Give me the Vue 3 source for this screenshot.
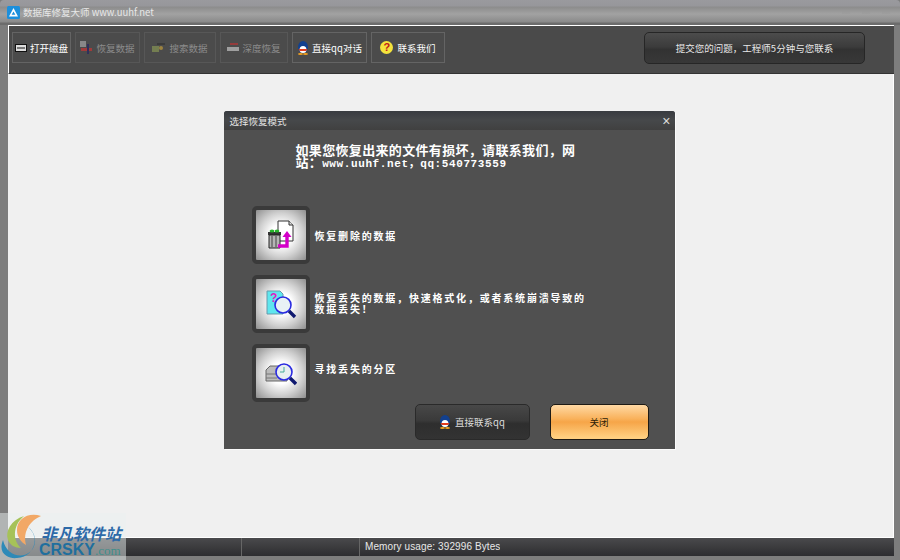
<script setup>
const tools = [
  { label: '打开磁盘', icon: 'disk', width: 59 },
  { label: '恢复数据', icon: 'restore', width: 65, off: true },
  { label: '搜索数据', icon: 'search', width: 72, off: true },
  { label: '深度恢复', icon: 'deep', width: 68, off: true },
  { label: '直接qq对话', icon: 'qq', width: 75 },
  { label: '联系我们', icon: 'help', width: 74 },
]
</script>

<template>
  <div class="window">
    <header class="titlebar">
      <svg class="app-icon" width="13" height="13" viewBox="0 0 13 13">
        <rect width="13" height="13" rx="1.5" fill="#1c8fdc" />
        <path d="M6.5 2 L11 10.5 H2 Z M6.5 5.4 L4.6 8.8 H8.4 Z" fill="#fff" fill-rule="evenodd" />
      </svg>
      <span class="app-title">数据库修复大师 www.uuhf.net</span>
      <div class="win-btns">
        <i></i><i></i><i></i>
      </div>
    </header>

    <div class="frame">
      <div class="toolbar">
        <button
          v-for="t in tools"
          :key="t.label"
          class="tool"
          :class="{ off: t.off }"
          :style="{ width: t.width + 'px' }"
        >
          <svg v-if="t.icon === 'disk'" width="12" height="8" viewBox="0 0 12 8">
            <rect x="0.5" y="0.5" width="11" height="7" fill="#ddd" stroke="#111" />
            <rect x="2" y="3" width="8" height="2" fill="#777" />
          </svg>
          <svg v-else-if="t.icon === 'restore'" width="13" height="14" viewBox="0 0 13 14">
            <rect x="0" y="0" width="6" height="6" fill="#aaa" />
            <rect x="1" y="7" width="11" height="3" fill="#c33" />
            <rect x="7" y="3" width="2" height="10" fill="#226" />
          </svg>
          <svg v-else-if="t.icon === 'search'" width="14" height="11" viewBox="0 0 14 11">
            <rect x="0" y="4" width="7" height="6" fill="#8a9a55" />
            <rect x="5" y="1" width="8" height="2" fill="#333" />
            <circle cx="9" cy="6" r="2" fill="#c9a23a" />
          </svg>
          <svg v-else-if="t.icon === 'deep'" width="12" height="9" viewBox="0 0 12 9">
            <rect x="0" y="4" width="12" height="4" fill="#ccc" />
            <rect x="3" y="0" width="8" height="2" fill="#b33" />
          </svg>
          <svg v-else-if="t.icon === 'qq'" width="12" height="14" viewBox="0 0 12 14">
            <ellipse cx="6" cy="6" rx="5" ry="6" fill="#12408f" />
            <ellipse cx="6" cy="8.5" rx="3.4" ry="3.6" fill="#fff" />
            <path d="M1.5 8 L10.5 8 L9 10 L3 10 Z" fill="#e23a1c" />
            <ellipse cx="3.5" cy="13" rx="2.5" ry="1" fill="#f0a020" />
            <ellipse cx="8.5" cy="13" rx="2.5" ry="1" fill="#f0a020" />
          </svg>
          <span v-else class="help-dot">?</span>
          <span>{{ t.label }}</span>
        </button>
        <button class="ask">提交您的问题，工程师5分钟与您联系</button>
      </div>

      <main class="content">
        <section class="dialog">
          <div class="dialog-title">
            <span>选择恢复模式</span>
            <span class="dialog-x">×</span>
          </div>
          <div class="dialog-body">
            <div class="notice">
              <div>如果您恢复出来的文件有损坏，请联系我们，网</div>
              <div class="notice-site">站：<span class="mono">www.uuhf.net，qq:540773559</span></div>
            </div>

            <div class="mode">
              <div class="mode-btn">
                <svg width="32" height="32" viewBox="0 0 32 32">
                  <path d="M13 2 H24 L28 6 V22 H13 Z" fill="#fff" stroke="#333" />
                  <path d="M24 2 V6 H28" fill="#ddd" stroke="#333" />
                  <rect x="3" y="13" width="13" height="3" fill="#333" />
                  <path d="M4 16 H15 V29 H4 Z" fill="#b5b5b5" stroke="#222" />
                  <path d="M7 17 V28 M11 17 V28" stroke="#444" />
                  <ellipse cx="7" cy="12" rx="2.4" ry="1.6" fill="#25b52a" />
                  <ellipse cx="12" cy="12" rx="2.4" ry="1.6" fill="#25b52a" />
                  <path d="M13 27 H22 V17" fill="none" stroke="#d400c8" stroke-width="3.4" />
                  <path d="M17.5 18 L22 12 L26.5 18 Z" fill="#d400c8" />
                </svg>
              </div>
              <span class="mode-text">恢复删除的数据</span>
            </div>

            <div class="mode">
              <div class="mode-btn">
                <svg width="32" height="32" viewBox="0 0 32 32">
                  <path d="M2 3 H15 L18 6 V26 H2 Z" fill="#5fe6ee" stroke="#69a" />
                  <text x="5" y="14" class="q-mark">?</text>
                  <circle cx="18" cy="17" r="8" fill="#e9f1f5" stroke="#2a2ae0" stroke-width="1.6" />
                  <path d="M24 23 L30 29" stroke="#101a70" stroke-width="3.4" />
                </svg>
              </div>
              <span class="mode-text up-2">恢复丢失的数据，快速格式化，或者系统崩溃导致的数据丢失！</span>
            </div>

            <div class="mode">
              <div class="mode-btn">
                <svg width="32" height="32" viewBox="0 0 32 32">
                  <path d="M1 13 L5 9 H22 V24 H1 Z" fill="#bbb" stroke="#666" />
                  <path d="M1 17 H12 M1 21 H12" stroke="#777" />
                  <circle cx="19" cy="15" r="8" fill="#e8eef0" stroke="#2a2ae0" stroke-width="1.6" />
                  <path d="M19 10 V15 H15" fill="none" stroke="#4a9" />
                  <path d="M25 21 L31 27" stroke="#101a70" stroke-width="3.4" />
                </svg>
              </div>
              <span class="mode-text up-10">寻找丢失的分区</span>
            </div>

            <div class="dialog-actions">
              <button class="btn-dark">
                <svg width="12" height="14" viewBox="0 0 12 14">
                  <ellipse cx="6" cy="6" rx="5" ry="6" fill="#12408f" />
                  <ellipse cx="6" cy="8.5" rx="3.4" ry="3.6" fill="#fff" />
                  <path d="M1.5 8 L10.5 8 L9 10 L3 10 Z" fill="#e23a1c" />
                  <ellipse cx="3.5" cy="13" rx="2.5" ry="1" fill="#f0a020" />
                  <ellipse cx="8.5" cy="13" rx="2.5" ry="1" fill="#f0a020" />
                </svg>
                直接联系qq
              </button>
              <button class="btn-orange">关闭</button>
            </div>
          </div>
        </section>
      </main>

      <footer class="statusbar">
        <span class="cell first"></span>
        <span class="cell second"></span>
        <span class="cell">Memory usage: 392996 Bytes</span>
      </footer>
    </div>

    <!-- site watermark sits over the window corner -->
    <div class="watermark">
      <svg class="wm-logo" width="42" height="47" viewBox="0 0 42 47">
        <path d="M41 3 C28 -1 17 6 17 17 C17 24 21 29 26 32 C23 22 27 9 41 3 Z" fill="#f2a866" />
        <path d="M24 3 C11 7 5 18 8 27 C10 32 15 35 21 35 C13 28 12 13 24 3 Z" fill="#a6c258" />
        <path d="M28 14 C36 20 38 32 30 39 C20 47 6 41 3 27 C-3 42 10 46 17 45 C32 45 42 26 28 14 Z" fill="#2e8ab8" />
      </svg>
      <div class="wm-text">
        <span class="wm-cn">非凡软件站</span>
        <span class="wm-en">CRSKY<small>.com</small></span>
      </div>
    </div>
  </div>
</template>

<style scoped>
.window {
  position: relative;
  width: 900px;
  height: 560px;
  overflow: hidden;
  display: flex;
  flex-direction: column;
  background: #7d7d7d;
  font-family: "Noto Sans CJK SC", "Liberation Sans", sans-serif;
}

.titlebar {
  height: 25px;
  flex: none;
  display: flex;
  align-items: flex-start;
  padding: 6px 10px 0 7px;
  box-sizing: border-box;
  background: linear-gradient(#9a9a9e 0, #97979b 6px, #8c8c8c 7px, #a2a2a2 14px, #8a8a8a 22px, #6c6c6c 23px);
  border-radius: 4px 4px 0 0;
}

.app-icon {
  flex: none;
}

.app-title {
  margin-left: 3px;
  font-size: 9.5px;
  line-height: 13px;
  color: #e8e8e8;
}

.win-btns {
  margin-left: auto;
  margin-top: 5px;
  display: flex;
  gap: 12px;
  opacity: 0.35;
}

.win-btns i {
  width: 8px;
  height: 3px;
  background: #999;
}

.frame {
  flex: 1;
  min-height: 0;
  display: flex;
  flex-direction: column;
  margin: 0 6px 4px 8px;
  border-top: 1px solid #fff;
}

.toolbar {
  height: 48px;
  flex: none;
  display: flex;
  align-items: flex-start;
  gap: 4px;
  padding: 6px 0 0 3px;
  box-sizing: border-box;
  background: #4a4a4a;
  border-left: 1px solid #fff;
  border-bottom: 1px solid #333;
}

.tool {
  height: 31px;
  padding: 0;
  display: flex;
  align-items: center;
  justify-content: center;
  gap: 3px;
  background: #4b4b4b;
  border: 1px solid #646464;
  font: 9.5px "Noto Sans CJK SC", sans-serif;
  color: #fff;
  white-space: nowrap;
}

.tool.off {
  color: #8c8c8c;
  border-color: #575757;
}

.tool.off svg {
  opacity: 0.65;
}

.help-dot {
  width: 13px;
  height: 13px;
  margin-right: 1px;
  border-radius: 50%;
  background: #f4e33c;
  color: #c01818;
  font: bold 11px/13px "Liberation Sans", sans-serif;
  text-align: center;
}

.ask {
  width: 221px;
  height: 32px;
  margin-left: auto;
  margin-right: 29px;
  background: linear-gradient(#4c4c4c, #3c3c3c 45%, #323232 55%, #383838);
  border: 1px solid #262626;
  border-radius: 5px;
  font: 9.5px "Noto Sans CJK SC", sans-serif;
  color: #e8e8e8;
}

.content {
  flex: 1;
  min-height: 0;
  display: flex;
  justify-content: center;
  align-items: flex-start;
  padding: 37px 3px 0 0;
  box-sizing: border-box;
  background: #f0f0f0;
  border-right: 1px solid #fff;
  border-bottom: 1px solid #fff;
}

.dialog {
  width: 451px;
  height: 338px;
  display: flex;
  flex-direction: column;
  background: #505050;
  border-radius: 3px 3px 0 0;
  box-shadow: 1px 1px 0 #fbfbfb;
}

.dialog-title {
  height: 19px;
  flex: none;
  display: flex;
  justify-content: space-between;
  align-items: center;
  padding: 0 4px 0 6px;
  background: linear-gradient(#383b40, #46484a 50%, #404040);
  border-radius: 3px 3px 0 0;
  font-size: 9.5px;
  color: #e4e4e4;
}

.dialog-x {
  font: 14px/1 "Liberation Sans", sans-serif;
  color: #ddd;
}

.dialog-body {
  flex: 1;
  display: flex;
  flex-direction: column;
  padding: 13px 26px 7px 28px;
}

.notice {
  margin: 0 0 38px 44px;
  font: bold 13px/13px "Noto Sans CJK SC", sans-serif;
  letter-spacing: 0.33px;
  color: #fff;
}

.notice-site {
  height: 13px;
  margin-top: -1px;
}

.mono {
  font: bold 11px/13px "Liberation Mono", "Noto Sans CJK SC", monospace;
  letter-spacing: 0.6px;
}

.mode {
  height: 58px;
  display: flex;
  align-items: center;
  gap: 5px;
  margin-bottom: 11px;
}

.mode-btn {
  width: 58px;
  height: 58px;
  flex: none;
  display: flex;
  align-items: center;
  justify-content: center;
  box-sizing: border-box;
  border: 4px solid #3a3a3a;
  border-radius: 5px;
  background: radial-gradient(circle, #fff 30%, #d0d0d0 62%, #8e8e8e 100%);
}

.mode-text {
  width: 280px;
  font: bold 10px/11px "Noto Sans CJK SC", sans-serif;
  letter-spacing: 1.8px;
  color: #fff;
}

.mode-text.up-2 {
  margin-bottom: 2px;
}

.mode-text.up-10 {
  margin-bottom: 10px;
}

.q-mark {
  font: bold 12px "Liberation Sans", sans-serif;
  fill: #e020c0;
}

.dialog-actions {
  display: flex;
  justify-content: flex-end;
  gap: 20px;
  margin-top: -9px;
}

.btn-dark,
.btn-orange {
  height: 36px;
  padding: 0;
  border-radius: 5px;
  font: 9.5px "Noto Sans CJK SC", sans-serif;
}

.btn-dark {
  width: 115px;
  display: flex;
  align-items: center;
  justify-content: center;
  gap: 4px;
  background: linear-gradient(#484848, #3a3a3a 45%, #2e2e2e 55%, #333);
  border: 1px solid #2a2a2a;
  color: #ddd;
}

.btn-orange {
  width: 99px;
  background: linear-gradient(#ffd9a4, #f9b25c 40%, #f6a548 50%, #ffcf80 95%);
  border: 1px solid #1e1a14;
  color: #2a1c08;
}

.statusbar {
  height: 18px;
  flex: none;
  display: flex;
  align-items: flex-start;
  overflow: hidden;
  background: linear-gradient(#4a4a4c, #2d2d30);
  font: 10px/18px "Liberation Sans", sans-serif;
  letter-spacing: 0.1px;
  color: #e8e8e8;
}

.cell {
  height: 14px;
  overflow: hidden;
  padding-left: 5px;
  white-space: nowrap;
}

.cell.first {
  width: 233px;
  height: 18px;
  padding: 0;
  border-right: 1px solid #666;
}

.cell.second {
  width: 117px;
  height: 18px;
  padding: 0;
  border-right: 1px solid #666;
}

.watermark {
  position: absolute;
  left: 0;
  bottom: 0;
  width: 126px;
  height: 47px;
  display: flex;
  background: rgba(235, 240, 240, 0.48);
}

.wm-logo {
  flex: none;
}

.wm-text {
  display: flex;
  flex-direction: column;
  margin-left: -1px;
  padding-top: 12px;
}

.wm-cn {
  font: italic bold 16px/17px "Noto Sans CJK SC", sans-serif;
  color: #2d6aa8;
  white-space: nowrap;
}

.wm-en {
  margin-left: -2px;
  font: bold 16px/15px "Liberation Sans", sans-serif;
  color: #1f6f9e;
  white-space: nowrap;
}

.wm-en small {
  font-family: "Liberation Serif", serif;
  font-size: 13px;
  font-weight: normal;
  color: #3f8f8c;
}
</style>

<style>
html, body { margin: 0; }
</style>
